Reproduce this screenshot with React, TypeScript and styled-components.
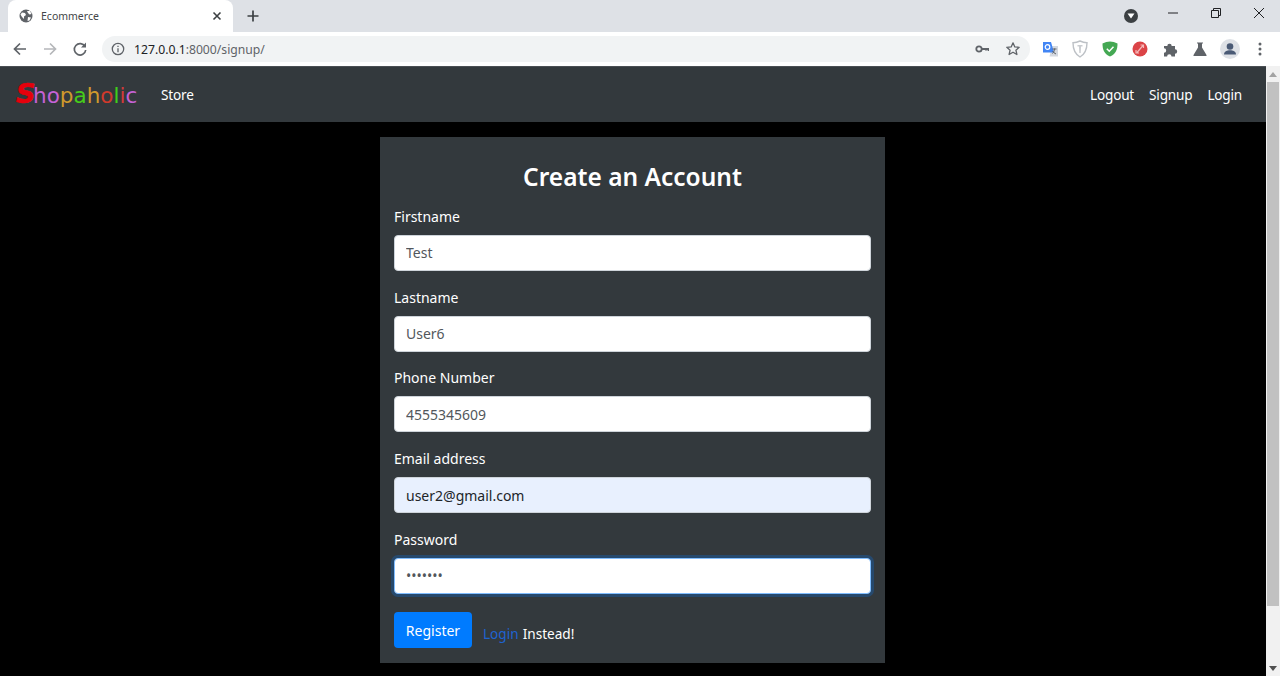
import React from "react";
import styled, { createGlobalStyle } from "styled-components";

const Global = createGlobalStyle`
  html, body { margin: 0; padding: 0; height: 676px; overflow: hidden; background: #000; }
  * { box-sizing: border-box; }
  body { font-family: "Noto Sans", "Open Sans", sans-serif; }
`;

const Page = styled.div`
  width: 1280px;
  height: 676px;
  display: flex;
  flex-direction: column;
  overflow: hidden;
`;

const TabStrip = styled.div`
  height: 32px;
  background: #dee1e6;
  display: flex;
  align-items: flex-end;
  padding-left: 8px;
`;

const Tab = styled.div`
  width: 225px;
  height: 32px;
  background: #fff;
  border-radius: 8px 8px 0 0;
  display: flex;
  align-items: center;
  padding: 0 8px 0 10px;
  gap: 7px;
`;

const TabTitle = styled.span`
  flex: 1;
  font-size: 10.5px;
  color: #45474a;
`;

const NewTab = styled.div`
  width: 28px;
  height: 32px;
  margin-left: 6px;
  display: flex;
  align-items: center;
  justify-content: center;
`;

const StripSpacer = styled.div`
  flex: 1;
`;

const WindowButtons = styled.div`
  height: 32px;
  display: flex;
  align-items: flex-start;
`;

const TabSearch = styled.div`
  width: 14px;
  height: 14px;
  margin: 9px 13px 0 0;
  border-radius: 50%;
  background: #3c4043;
  display: flex;
  align-items: center;
  justify-content: center;
`;

const WinButton = styled.div`
  width: 43px;
  height: 26px;
  display: flex;
  align-items: center;
  justify-content: center;
`;

const Toolbar = styled.div`
  height: 34px;
  background: #fff;
  display: flex;
  align-items: center;
  padding-left: 5px;
`;

const NavIcon = styled.div`
  width: 30px;
  height: 30px;
  display: flex;
  align-items: center;
  justify-content: center;
`;

const Omnibox = styled.div`
  width: 928px;
  height: 26px;
  margin-left: 7px;
  border-radius: 13px;
  background: #f1f3f4;
  display: flex;
  align-items: center;
  padding: 0 9px;
`;

const Url = styled.span`
  flex: 1;
  margin-left: 9px;
  font-size: 12.2px;
  color: #5f6368;
`;

const UrlHost = styled.span`
  color: #202124;
`;

const OmniEnd = styled.div`
  display: flex;
  align-items: center;
  gap: 16px;
`;

const Extensions = styled.div`
  display: flex;
  align-items: center;
  margin-left: 5px;
`;

const ExtSlot = styled.div`
  width: 30px;
  height: 30px;
  display: flex;
  align-items: center;
  justify-content: center;
`;

const Viewport = styled.div`
  flex: 1;
  min-height: 0;
  display: flex;
`;

const Content = styled.div`
  flex: 1;
  min-width: 0;
  background: #000;
  display: flex;
  flex-direction: column;
`;

const Navbar = styled.nav`
  height: 56px;
  background: #33393d;
  border-top: 1px solid #4a4f54;
  display: flex;
  align-items: center;
  padding: 0 24px 0 16px;
`;

const Brand = styled.div`
  width: 145px;
  display: flex;
  align-items: baseline;
  font-family: "DejaVu Sans", sans-serif;
  font-size: 21.5px;
  line-height: 24px;
`;

const BrandS = styled.span`
  color: #e6000c;
  font-size: 27px;
  font-weight: 700;
  font-style: italic;
  width: 17px;
  -webkit-text-stroke: 0.6px #e6000c;
`;

const Letter = styled.span<{ $c: string }>`
  color: ${(p) => p.$c};
`;

const NavLink = styled.a`
  color: #fff;
  font-size: 13.6px;
  letter-spacing: -0.2px;
  text-decoration: none;
`;

const NavRight = styled.div`
  margin-left: auto;
  display: flex;
  gap: 15px;
`;

const Card = styled.form`
  width: 505px;
  height: 526px;
  margin: 15px 0 0 380px;
  background: #33393d;
  padding: 22px 14px 0;
  display: flex;
  flex-direction: column;
`;

const Title = styled.h3`
  margin: 0 0 8.8px;
  color: #fff;
  font-size: 24.5px;
  line-height: 36px;
  font-weight: 600;
  text-align: center;
`;

const Field = styled.div`
  height: 80.8px;
  display: flex;
  flex-direction: column;
`;

const Label = styled.label`
  color: #fff;
  font-size: 14px;
  line-height: 25px;
  margin-bottom: 6px;
`;

const Input = styled.input<{ $autofill?: boolean; $focus?: boolean }>`
  width: 100%;
  height: 36px;
  flex: none;
  border-radius: 4px;
  padding: 0 11px;
  font-family: inherit;
  font-size: 14px;
  color: ${(p) => (p.$autofill ? "#212529" : "#52575c")};
  background: ${(p) => (p.$autofill ? "#e8f0fe" : "#fff")};
  border: 1px solid ${(p) => (p.$focus ? "#80bdff" : "#ced4da")};
  box-shadow: ${(p) => (p.$focus ? "0 0 0 3px rgba(0,123,255,.25)" : "none")};
  outline: none;
`;

const Actions = styled.div`
  display: flex;
  align-items: flex-end;
  margin-top: 4.5px;
`;

const Register = styled.button`
  width: 78px;
  height: 36px;
  border: 0;
  border-radius: 4px;
  background: #007bff;
  color: #fff;
  font-family: inherit;
  font-size: 14px;
  padding: 0;
`;

const After = styled.span`
  margin-left: 11px;
  color: #fff;
  font-size: 13.6px;
  line-height: 22px;
  margin-bottom: 3px;
`;

const LoginLink = styled.a`
  color: #1e63d0;
  text-decoration: none;
  margin-right: 4px;
`;

const Scrollbar = styled.div`
  width: 14px;
  background: #f1f1f1;
  display: flex;
  flex-direction: column;
  align-items: center;
`;

const ScrollArrow = styled.div`
  height: 16px;
  display: flex;
  align-items: center;
  justify-content: center;
`;

const Thumb = styled.div`
  width: 12px;
  height: 524px;
  background: #c1c1c1;
`;

const ScrollGap = styled.div`
  flex: 1;
`;

const fields = [
  { label: "Firstname", value: "Test" },
  { label: "Lastname", value: "User6" },
  { label: "Phone Number", value: "4555345609" },
  { label: "Email address", value: "user2@gmail.com", autofill: true },
];

const logo: [string, string][] = [
  ["h", "#c562d6"],
  ["o", "#c562d6"],
  ["p", "#d09a2c"],
  ["a", "#46cc1a"],
  ["h", "#d09a2c"],
  ["o", "#d03a2c"],
  ["l", "#3fd01a"],
  ["i", "#d03a3a"],
  ["c", "#c562d6"],
];

export default function App() {
  return (
    <Page>
      <Global />
      <TabStrip>
        <Tab>
          <svg width="16" height="16" viewBox="0 0 16 16">
            <circle cx="8" cy="8" r="6.5" fill="#5f6368" />
            <path d="M4 4.500l3 .5 1 2-2 1.500v2.500L4 9 2.500 6.500zM9 3h3l1.500 3-2 .5L10 5zM10 9l3 .5-1.500 3-2 .5z" fill="#fff" />
          </svg>
          <TabTitle>Ecommerce</TabTitle>
          <svg width="16" height="16" viewBox="0 0 16 16">
            <path d="M4.500 4.500l7 7M11.500 4.500l-7 7" stroke="#3c4043" strokeWidth="1.600" />
          </svg>
        </Tab>
        <NewTab>
          <svg width="14" height="14" viewBox="0 0 14 14">
            <path d="M7 1.500v11M1.500 7h11" stroke="#3c4043" strokeWidth="1.700" />
          </svg>
        </NewTab>
        <StripSpacer />
        <WindowButtons>
          <TabSearch>
            <svg width="8" height="6" viewBox="0 0 8 6">
              <path d="M0.500 0.500h7L4 5.500z" fill="#fff" />
            </svg>
          </TabSearch>
          <WinButton>
            <svg width="12" height="12" viewBox="0 0 12 12">
              <path d="M1 6h10" stroke="#202124" strokeWidth="1" />
            </svg>
          </WinButton>
          <WinButton>
            <svg width="12" height="12" viewBox="0 0 12 12">
              <path d="M3.500 3V1.500h7v7H9M1.500 3.500h7v7h-7z" fill="none" stroke="#202124" strokeWidth="1" />
            </svg>
          </WinButton>
          <WinButton>
            <svg width="12" height="12" viewBox="0 0 12 12">
              <path d="M1 1l10 10M11 1L1 11" stroke="#202124" strokeWidth="1" />
            </svg>
          </WinButton>
        </WindowButtons>
      </TabStrip>
      <Toolbar>
        <NavIcon>
          <svg width="16" height="16" viewBox="0 0 16 16">
            <path d="M14 8H2.500M8 2.500L2.500 8 8 13.500" fill="none" stroke="#5f6368" strokeWidth="1.700" />
          </svg>
        </NavIcon>
        <NavIcon>
          <svg width="16" height="16" viewBox="0 0 16 16">
            <path d="M2 8h11.500M8 2.500L13.500 8 8 13.500" fill="none" stroke="#b5b7ba" strokeWidth="1.700" />
          </svg>
        </NavIcon>
        <NavIcon>
          <svg width="16" height="16" viewBox="0 0 16 16">
            <path d="M13 5.500A5.700 5.700 0 1 0 13.700 9" fill="none" stroke="#5f6368" strokeWidth="1.700" />
            <path d="M14 1.500v5h-5z" fill="#5f6368" />
          </svg>
        </NavIcon>
        <Omnibox>
          <svg width="14" height="14" viewBox="0 0 14 14">
            <circle cx="7" cy="7" r="5.700" fill="none" stroke="#5f6368" strokeWidth="1.300" />
            <path d="M7 6.200v4M7 3.800v1.200" stroke="#5f6368" strokeWidth="1.300" />
          </svg>
          <Url>
            <UrlHost>127.0.0.1</UrlHost>:8000/signup/
          </Url>
          <OmniEnd>
            <svg width="14" height="14" viewBox="0 0 14 14">
              <circle cx="4" cy="7" r="2.700" fill="none" stroke="#5f6368" strokeWidth="1.800" />
              <path d="M6.500 7H13.500V9M11 7v1.500" fill="none" stroke="#5f6368" strokeWidth="1.800" />
            </svg>
            <svg width="16" height="16" viewBox="0 0 16 16">
              <path d="M8 1.800l1.800 4.100 4.400.4-3.300 2.900 1 4.300L8 11.200l-3.900 2.300 1-4.300-3.300-2.900 4.400-.4z" fill="none" stroke="#5f6368" strokeWidth="1.300" strokeLinejoin="round" />
            </svg>
          </OmniEnd>
        </Omnibox>
        <Extensions>
          <ExtSlot>
            <svg width="16" height="16" viewBox="0 0 16 16">
              <path d="M10 5h6v10.500H7.500z" fill="#d4d8df" />
              <path d="M1 1h8l3 10.500H1z" fill="#4285f4" />
              <circle cx="5.500" cy="6" r="2.300" fill="none" stroke="#fff" strokeWidth="1.200" />
              <path d="M10.500 8h4M12.500 7.500c0 2.500-1 4-2 5M10.500 10c.8 1.300 2 2.400 3.500 3" fill="none" stroke="#5f6368" strokeWidth="1" />
            </svg>
          </ExtSlot>
          <ExtSlot>
            <svg width="16" height="18" viewBox="0 0 16 18">
              <path d="M8 1c2 1 4.500 1.700 7 1.700 0 6-1.500 11-7 14.300C2.500 13.700 1 8.700 1 2.700 3.500 2.700 6 2 8 1z" fill="none" stroke="#bdc1c6" strokeWidth="1.400" />
              <path d="M5.500 5h5v1.500H9l-.3 6.500h-1.400L7 6.500H5.500z" fill="#c9ccd0" />
            </svg>
          </ExtSlot>
          <ExtSlot>
            <svg width="16" height="16" viewBox="0 0 16 16">
              <path d="M8 .500c2.500 0 5 .8 7.500 2 0 6-1.500 10.500-7.500 13C2 13 .5 8.500.5 2.500 3 1.300 5.500.5 8 .5z" fill="#44a853" />
              <path d="M4.800 7.700L7.300 10.200 11.500 5.800" fill="none" stroke="#fff" strokeWidth="1.500" />
            </svg>
          </ExtSlot>
          <ExtSlot>
            <svg width="16" height="16" viewBox="0 0 16 16">
              <circle cx="8" cy="8" r="7.500" fill="#db4447" />
              <path d="M5 11.500l6-7M8.500 4h3v3M4 9v3h3" fill="none" stroke="#f5b7b8" strokeWidth="1.200" />
            </svg>
          </ExtSlot>
          <ExtSlot>
            <svg width="16" height="16" viewBox="0 0 16 16">
              <path d="M2 5h3.300a2.200 2.200 0 1 1 4.400 0H13v3.300a2.200 2.200 0 1 1 0 4.400V15.500H9.500a2.200 2.200 0 1 0-4.400 0H2v-3.800a2.200 2.200 0 1 0 0-4.400z" fill="#5f6368" />
            </svg>
          </ExtSlot>
          <ExtSlot>
            <svg width="16" height="16" viewBox="0 0 16 16">
              <path d="M5 1.500h6v1h-1v4l4.500 7.500v1h-13v-1L6 6.500v-4H5z" fill="#5f6368" />
            </svg>
          </ExtSlot>
          <ExtSlot>
            <svg width="20" height="20" viewBox="0 0 20 20">
              <circle cx="10" cy="10" r="10" fill="#dee1e6" />
              <circle cx="10" cy="7.500" r="3.300" fill="#4a5a75" />
              <path d="M4 15.500c0-3 3-4.300 6-4.300s6 1.300 6 4.300z" fill="#4a5a75" />
            </svg>
          </ExtSlot>
          <ExtSlot>
            <svg width="4" height="14" viewBox="0 0 4 14">
              <circle cx="2" cy="2" r="1.500" fill="#5f6368" />
              <circle cx="2" cy="7" r="1.500" fill="#5f6368" />
              <circle cx="2" cy="12" r="1.500" fill="#5f6368" />
            </svg>
          </ExtSlot>
        </Extensions>
      </Toolbar>
      <Viewport>
        <Content>
          <Navbar>
            <Brand>
              <BrandS>S</BrandS>
              {logo.map(([l, c], i) => (
                <Letter key={i} $c={c}>{l}</Letter>
              ))}
            </Brand>
            <NavLink>Store</NavLink>
            <NavRight>
              <NavLink>Logout</NavLink>
              <NavLink>Signup</NavLink>
              <NavLink>Login</NavLink>
            </NavRight>
          </Navbar>
          <Card>
            <Title>Create an Account</Title>
            {fields.map((f) => (
              <Field key={f.label}>
                <Label>{f.label}</Label>
                <Input readOnly value={f.value} $autofill={f.autofill} />
              </Field>
            ))}
            <Field>
              <Label>Password</Label>
              <Input readOnly type="password" value="1234567" $focus />
            </Field>
            <Actions>
              <Register type="button">Register</Register>
              <After>
                <LoginLink>Login</LoginLink>Instead!
              </After>
            </Actions>
          </Card>
        </Content>
        <Scrollbar>
          <ScrollArrow>
            <svg width="8" height="5" viewBox="0 0 8 5"><path d="M4 0l4 5H0z" fill="#a3a3a3" /></svg>
          </ScrollArrow>
          <Thumb />
          <ScrollGap />
          <ScrollArrow>
            <svg width="8" height="5" viewBox="0 0 8 5"><path d="M0 0h8L4 5z" fill="#505050" /></svg>
          </ScrollArrow>
        </Scrollbar>
      </Viewport>
    </Page>
  );
}
